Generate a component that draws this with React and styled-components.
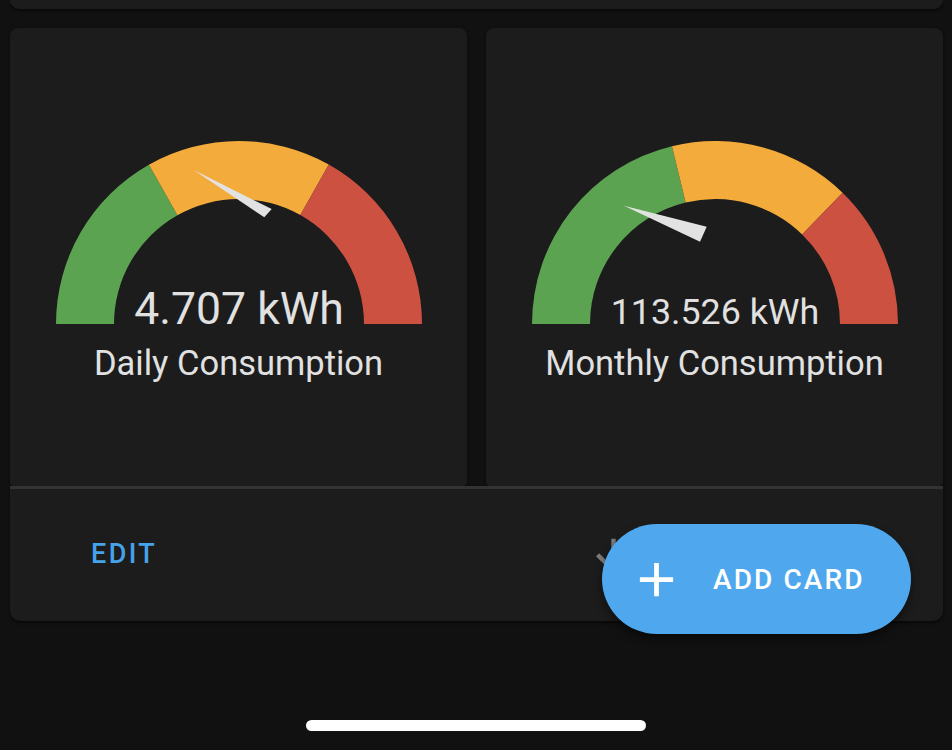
import styled, { createGlobalStyle } from 'styled-components'

const GlobalStyle = createGlobalStyle`
	html, body {
		margin: 0;
		padding: 0;
		background: #111111;
		font-family: Roboto, "Noto Sans", "Liberation Sans", sans-serif;
	}
`

const colors = {
	green: '#5ba351',
	orange: '#f3ab3c',
	red: '#cd5141',
	text: '#e1e1e1',
	primary: '#4ba6eb',
}

const R_OUT = 183
const R_IN = 125

const point = (r, deg) => {
	const a = (deg * Math.PI) / 180
	return [-r * Math.cos(a), -r * Math.sin(a)]
}

// segment from a0 to a1 degrees, measured from the left end of the gauge
const arcPath = (a0, a1) => {
	const [x0, y0] = point(R_OUT, a0)
	const [x1, y1] = point(R_OUT, a1)
	const [x2, y2] = point(R_IN, a1)
	const [x3, y3] = point(R_IN, a0)
	return `M ${x0} ${y0} A ${R_OUT} ${R_OUT} 0 0 1 ${x1} ${y1} L ${x2} ${y2} A ${R_IN} ${R_IN} 0 0 0 ${x3} ${y3} Z`
}

const Page = styled.div`
	min-height: 750px;
	padding: 0 9px 0 10px;
	display: flex;
	flex-direction: column;
	position: relative;
	overflow: hidden;
`

const TopCard = styled.div`
	height: 9px;
	background: #1c1c1c;
	border-radius: 0 0 10px 10px;
	box-shadow: 0 2px 3px rgba(0, 0, 0, 0.5);
`

const Stack = styled.div`
	margin-top: 19px;
	display: flex;
	flex-direction: column;
`

const Row = styled.div`
	display: grid;
	grid-template-columns: 1fr 1fr;
	gap: 19px;
	height: 458px;
`

const GaugeCard = styled.div`
	background: #1c1c1c;
	border-radius: 8px 8px 4px 4px;
	box-shadow: 0 1px 3px rgba(0, 0, 0, 0.5);
	display: flex;
	flex-direction: column;
	align-items: center;
	padding-top: 103px;
`

const GaugeSvg = styled.svg`
	display: block;
	overflow: visible;
`

const Value = styled.text`
	fill: ${colors.text};
	font-family: Roboto, "Liberation Sans", sans-serif;
	font-size: ${p => p.$size}px;
`

const Label = styled.div`
	margin-top: 19px;
	color: ${colors.text};
	font-size: 34.5px;
	line-height: 1.2;
	white-space: nowrap;
`

const Actions = styled.div`
	height: 132px;
	background: #1c1c1c;
	border-top: 3px solid #333333;
	border-radius: 0 0 10px 10px;
	box-shadow: 0 2px 3px rgba(0, 0, 0, 0.5);
	display: flex;
	align-items: center;
	padding: 0 65px 0 81px;
`

const EditButton = styled.button`
	background: none;
	border: 0;
	padding: 0 0 2px;
	color: #46a3ea;
	font-family: Roboto, "Liberation Sans", sans-serif;
	font-weight: 500;
	font-size: 27px;
	letter-spacing: 2.4px;
`

const IconGroup = styled.div`
	margin-left: auto;
	display: flex;
`

const IconButton = styled.div`
	width: 106px;
	height: 106px;
	display: flex;
	align-items: center;
	justify-content: center;
	color: #7a7a7a;
	margin-top: 2px;
`

const Fab = styled.button`
	position: absolute;
	left: 602px;
	top: 524px;
	width: 309px;
	height: 110px;
	border: 0;
	border-radius: 55px;
	background: #4fa8ed;
	box-shadow: 0 5px 10px rgba(0, 0, 0, 0.45);
	display: flex;
	align-items: center;
	padding: 0 0 0 26px;
	gap: 28px;
	color: #ffffff;
	font-family: Roboto, "Liberation Sans", sans-serif;
	font-weight: 500;
	font-size: 28px;
	letter-spacing: 2.1px;
`

const HomeBar = styled.div`
	position: absolute;
	left: 306px;
	top: 720px;
	width: 340px;
	height: 11px;
	border-radius: 6px;
	background: #ffffff;
`

const Icon = ({ d, size }) => (
	<svg width={size} height={size} viewBox="0 0 24 24">
		<path d={d} fill="currentColor" />
	</svg>
)

const gauges = [
	{
		value: '4.707 kWh',
		size: 44.5,
		label: 'Daily Consumption',
		stops: [60.5, 119.4],
		needle: '-45.3,-154 32.7,-115 25.3,-106.7',
	},
	{
		value: '113.526 kWh',
		size: 35.8,
		label: 'Monthly Consumption',
		stops: [76.4, 134.2],
		needle: '-91,-118.3 -8.3,-97.3 -15,-82.3',
	},
]

const Gauge = ({ value, size, label, stops, needle }) => (
	<GaugeCard>
		<GaugeSvg width="386" height="193" viewBox="-193 -193 386 193">
			<path d={arcPath(0, stops[0])} fill={colors.green} />
			<path d={arcPath(stops[0], stops[1])} fill={colors.orange} />
			<path d={arcPath(stops[1], 180)} fill={colors.red} />
			<polygon points={needle} fill="#e2e2e2" />
			<Value $size={size} x="0" y="0" textAnchor="middle">
				{value}
			</Value>
		</GaugeSvg>
		<Label>{label}</Label>
	</GaugeCard>
)

export default function App() {
	return (
		<>
			<GlobalStyle />
			<Page>
				<TopCard />
				<Stack>
					<Row>
						{gauges.map(g => (
							<Gauge key={g.label} {...g} />
						))}
					</Row>
					<Actions>
						<EditButton>EDIT</EditButton>
						<IconGroup>
							<IconButton>
								<Icon size={53} d="M11,4H13V16L18.5,10.5L19.92,11.92L12,19.84L4.08,11.92L5.5,10.5L11,16V4Z" />
							</IconButton>
							<IconButton>
								<Icon size={53} d="M13,20H11V8L5.5,13.5L4.08,12.08L12,4.16L19.92,12.08L18.5,13.5L13,8V20Z" />
							</IconButton>
							<IconButton>
								<Icon size={53} d="M12,16A2,2 0 0,1 14,18A2,2 0 0,1 12,20A2,2 0 0,1 10,18A2,2 0 0,1 12,16M12,10A2,2 0 0,1 14,12A2,2 0 0,1 12,14A2,2 0 0,1 10,12A2,2 0 0,1 12,10M12,4A2,2 0 0,1 14,6A2,2 0 0,1 12,8A2,2 0 0,1 10,6A2,2 0 0,1 12,4Z" />
							</IconButton>
						</IconGroup>
					</Actions>
				</Stack>
				<Fab>
					<Icon size={57} d="M19,13H13V19H11V13H5V11H11V5H13V11H19V13Z" />
					<span>ADD CARD</span>
				</Fab>
				<HomeBar />
			</Page>
		</>
	)
}
